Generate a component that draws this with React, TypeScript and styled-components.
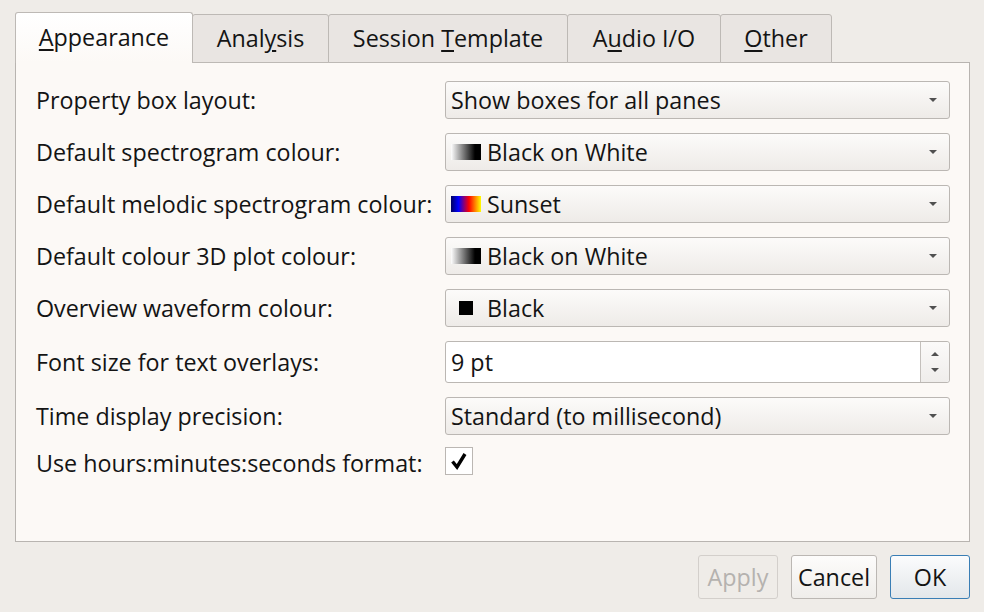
import styled, { createGlobalStyle } from 'styled-components';

const Global = createGlobalStyle`
  html, body {
    margin: 0;
    padding: 0;
    background: #efece8;
  }
  body {
    font-family: 'Open Sans', 'Noto Sans', sans-serif;
    font-size: 23.3px;
    color: #141414;
  }
`;

const Window = styled.div`
  width: 984px;
  height: 612px;
  box-sizing: border-box;
  padding: 12px 14px 0 15px;
  display: flex;
  flex-direction: column;
`;

const TabBar = styled.div`
  display: flex;
  align-items: flex-end;
  padding-left: 1px;
  height: 51px;
  position: relative;
  z-index: 1;
`;

const Tab = styled.div<{ $active?: boolean; $w: number }>`
  box-sizing: border-box;
  width: ${(p) => p.$w}px;
  height: ${(p) => (p.$active ? '51px' : '49px')};
  display: flex;
  align-items: center;
  justify-content: center;
  border: 1px solid #bdb9b5;
  border-bottom: ${(p) => (p.$active ? 'none' : '1px solid #bdb9b5')};
  border-radius: 3px 3px 0 0;
  margin-left: -1px;
  background: ${(p) =>
    p.$active ? 'linear-gradient(#ffffff, #fcf9f6)' : '#e9e5e2'};
  padding-bottom: ${(p) => (p.$active ? '3px' : '1px')};
  u {
    text-decoration: underline;
    text-decoration-thickness: 1.5px;
    text-underline-offset: 3px;
  }
`;

const Panel = styled.div`
  box-sizing: border-box;
  height: 480px;
  margin-top: -1px;
  border: 1px solid #b8b4b0;
  background: #fcf9f6;
  padding: 18px 19px 0 20px;
  display: grid;
  grid-template-columns: 409px 1fr;
  grid-template-rows: 38px 38px 38px 38px 38px 42px 38px 27px;
  row-gap: 14px;
  align-items: center;
  align-content: start;
`;

const Label = styled.div`
  white-space: nowrap;
`;

const Combo = styled.div`
  box-sizing: border-box;
  height: 38px;
  border: 1px solid #bbb7b3;
  border-radius: 3px;
  background: linear-gradient(#fcfbfa, #eeebe8);
  display: flex;
  align-items: center;
  padding: 0 12px 0 5px;
  gap: 6px;
`;

const ComboText = styled.span`
  flex: 1;
  white-space: nowrap;
`;

const Arrow = styled.span`
  width: 0;
  height: 0;
  border-left: 4px solid transparent;
  border-right: 4px solid transparent;
  border-top: 4px solid #505050;
`;

const Swatch = styled.span<{ $bg: string }>`
  width: 30px;
  height: 16px;
  background: ${(p) => p.$bg};
  flex: none;
`;

const Spin = styled.div`
  box-sizing: border-box;
  height: 42px;
  border: 1px solid #bbb7b3;
  border-radius: 3px;
  background: #ffffff;
  display: flex;
`;

const SpinText = styled.div`
  flex: 1;
  display: flex;
  align-items: center;
  padding-left: 5px;
`;

const SpinButtons = styled.div`
  width: 28px;
  border-left: 1px solid #c4c0bc;
  background: linear-gradient(#fbfaf9, #efedeb);
  border-radius: 0 3px 3px 0;
  display: flex;
  flex-direction: column;
  align-items: center;
  justify-content: center;
  gap: 12px;
`;

const UpArrow = styled.span`
  width: 0;
  height: 0;
  border-left: 4px solid transparent;
  border-right: 4px solid transparent;
  border-bottom: 4px solid #505050;
`;

const CheckCell = styled.div`
  margin-top: -3px;
`;

const Check = styled.div`
  box-sizing: border-box;
  width: 28px;
  height: 28px;
  border: 1px solid #bbb7b3;
  background: #ffffff;
  display: flex;
  align-items: center;
  justify-content: center;
`;

const Footer = styled.div`
  display: flex;
  justify-content: flex-end;
  gap: 13px;
  padding-top: 13px;
`;

const Button = styled.div<{ $primary?: boolean; $disabled?: boolean; $w: number }>`
  box-sizing: border-box;
  height: 44px;
  width: ${(p) => p.$w}px;
  display: flex;
  align-items: center;
  justify-content: center;
  border-radius: 3px;
  border: 1px solid ${(p) => (p.$primary ? '#3a7eb5' : p.$disabled ? '#d3cfcb' : '#bbb7b3')};
  background: ${(p) =>
    p.$primary
      ? 'linear-gradient(#fbfcfd, #e3e7ea)'
      : p.$disabled
      ? '#efece8'
      : 'linear-gradient(#fdfcfb, #efedea)'};
  color: ${(p) => (p.$disabled ? '#b5b2af' : '#141414')};
`;

const grey = 'linear-gradient(90deg, #ffffff, #000000 80%)';
const sunset = 'linear-gradient(90deg, #000060, #0000ff 25%, #ff0000 60%, #ffa000 85%, #ffff00)';

function ComboBox({ text, swatch }: { text: string; swatch?: string }) {
  return (
    <Combo>
      {swatch && <Swatch $bg={swatch} />}
      <ComboText>{text}</ComboText>
      <Arrow />
    </Combo>
  );
}

export default function App() {
  return (
    <Window>
      <Global />
      <TabBar>
        <Tab $active $w={178}><span><u>A</u>ppearance</span></Tab>
        <Tab $w={137}><span>Anal<u>y</u>sis</span></Tab>
        <Tab $w={240}><span>Session <u>T</u>emplate</span></Tab>
        <Tab $w={154}><span>A<u>u</u>dio I/O</span></Tab>
        <Tab $w={112}><span><u>O</u>ther</span></Tab>
      </TabBar>
      <Panel>
        <Label>Property box layout:</Label>
        <ComboBox text="Show boxes for all panes" />
        <Label>Default spectrogram colour:</Label>
        <ComboBox text="Black on White" swatch={grey} />
        <Label>Default melodic spectrogram colour:</Label>
        <ComboBox text="Sunset" swatch={sunset} />
        <Label>Default colour 3D plot colour:</Label>
        <ComboBox text="Black on White" swatch={grey} />
        <Label>Overview waveform colour:</Label>
        <ComboBox text="Black" swatch="linear-gradient(#000, #000) center / 14px 14px no-repeat" />
        <Label>Font size for text overlays:</Label>
        <Spin>
          <SpinText>9 pt</SpinText>
          <SpinButtons>
            <UpArrow />
            <Arrow />
          </SpinButtons>
        </Spin>
        <Label>Time display precision:</Label>
        <ComboBox text="Standard (to millisecond)" />
        <Label>Use hours:minutes:seconds format:</Label>
        <CheckCell>
          <Check>
            <svg width="20" height="20" viewBox="0 0 20 20">
              <path d="M3.5 10.5 L8 16 L16 3" fill="none" stroke="#000" strokeWidth="3.4" strokeLinejoin="miter" />
            </svg>
          </Check>
        </CheckCell>
      </Panel>
      <Footer>
        <Button $disabled $w={80}>Apply</Button>
        <Button $w={86}>Cancel</Button>
        <Button $primary $w={80}>OK</Button>
      </Footer>
    </Window>
  );
}
